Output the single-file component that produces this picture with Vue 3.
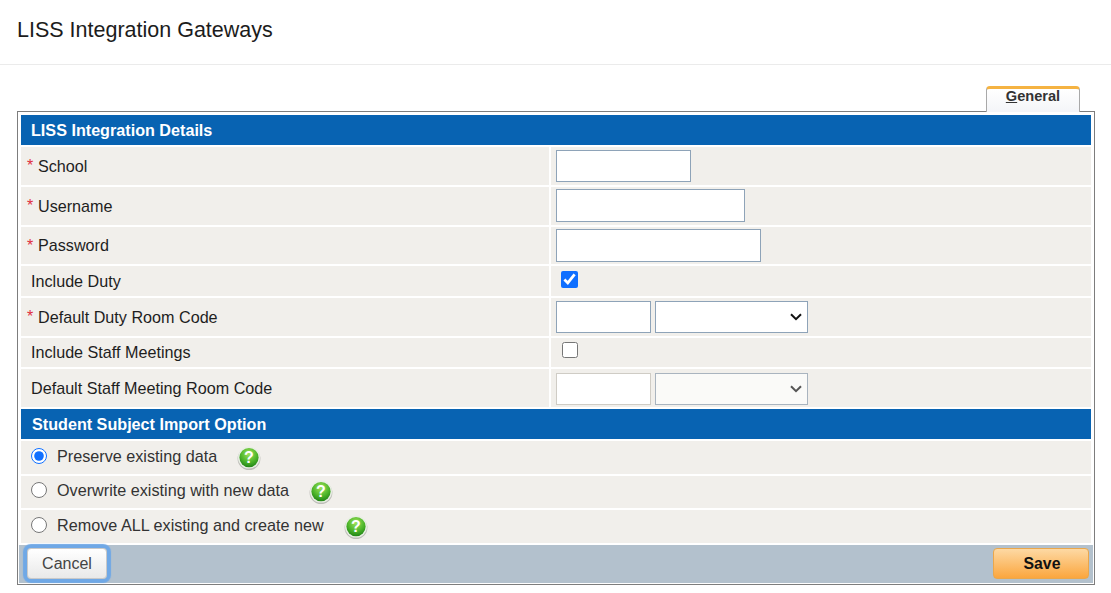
<script setup>
const radios = [
  { label: 'Preserve existing data', checked: true, h: 33 },
  { label: 'Overwrite existing with new data', checked: false, h: 32 },
  { label: 'Remove ALL existing and create new', checked: false, h: 33 }
]
</script>

<template>
  <div class="page">
    <header class="top"><h1>LISS Integration Gateways</h1></header>
    <div class="tabs"><div class="tab"><u>G</u>eneral</div></div>
    <section class="panel">
      <div class="inner">
        <div class="band">LISS Integration Details</div>
        <div class="row h38">
          <div class="lab"><i>*</i>School</div>
          <div class="val t3"><input class="w135 s32" type="text" /></div>
        </div>
        <div class="row h38">
          <div class="lab"><i>*</i>Username</div>
          <div class="val t2"><input class="w189" type="text" /></div>
        </div>
        <div class="row h37">
          <div class="lab"><i>*</i>Password</div>
          <div class="val t2"><input class="w205" type="password" /></div>
        </div>
        <div class="row h30">
          <div class="lab pad">Include Duty</div>
          <div class="val"><input class="chk" type="checkbox" checked /></div>
        </div>
        <div class="row h38">
          <div class="lab"><i>*</i>Default Duty Room Code</div>
          <div class="val t3"><input class="w95 s32" type="text" /><select class="sel"></select></div>
        </div>
        <div class="row h29">
          <div class="lab pad">Include Staff Meetings</div>
          <div class="val"><input class="chk off" type="checkbox" /></div>
        </div>
        <div class="row h38">
          <div class="lab pad">Default Staff Meeting Room Code</div>
          <div class="val t4"><input class="w95 s32" type="text" disabled /><select class="sel" disabled></select></div>
        </div>
        <div class="band second">Student Subject Import Option</div>
        <label v-for="r in radios" :key="r.label" class="radio" :style="{ height: r.h + 'px' }">
          <input type="radio" name="opt" :checked="r.checked" />
          <span class="rtext">{{ r.label }}</span>
          <svg class="help" width="24" height="24" viewBox="0 0 24 24">
            <defs>
              <radialGradient id="hg" cx="50%" cy="30%" r="72%">
                <stop offset="0" stop-color="#a0e35c" />
                <stop offset="0.6" stop-color="#4db52a" />
                <stop offset="1" stop-color="#1f8216" />
              </radialGradient>
            </defs>
            <circle cx="12" cy="12.8" r="11.4" fill="#bdbdb8" />
            <circle cx="12" cy="11.6" r="11" fill="#e9efe4" />
            <circle cx="12" cy="11.6" r="9.6" fill="url(#hg)" />
            <text x="12" y="17.4" text-anchor="middle" class="q">?</text>
          </svg>
        </label>
      </div>
      <footer class="foot">
        <button class="cancel">Cancel</button>
        <button class="save">Save</button>
      </footer>
    </section>
  </div>
</template>

<style>
html, body { margin: 0; background: #fff; }
</style>

<style scoped>
.page {
  width: 1111px;
  height: 593px;
  overflow: hidden;
  font-family: "Liberation Sans", Arial, sans-serif;
  color: #222;
  box-sizing: border-box;
}
.top {
  height: 64px;
  border-bottom: 1px solid #ebebeb;
  padding-left: 17px;
}
.top h1 {
  margin: 0;
  padding-top: 18px;
  font-size: 21.5px;
  line-height: 25px;
  font-weight: 400;
  color: #1c1c1c;
}
.tabs {
  display: flex;
  justify-content: flex-end;
  height: 26px;
  margin-top: 21px;
  padding-right: 31px;
  position: relative;
  z-index: 1;
}
.tab {
  width: 94px;
  height: 26px;
  box-sizing: border-box;
  border: 1px solid #a9a9a9;
  border-top: 3px solid #f5b342;
  border-bottom: 0;
  border-radius: 4px 4px 0 0;
  background: linear-gradient(#fff, #f4f5f8);
  text-align: center;
  font-size: 14.6px;
  font-weight: 700;
  line-height: 15px;
  color: #333;
}
.panel {
  margin: -1px 0 0 17px;
  width: 1078px;
  height: 474px;
  box-sizing: border-box;
  border: 1px solid #7d7d7d;
  display: flex;
  flex-direction: column;
  padding: 1px;
  background: #fff;
}
.inner {
  flex: 1;
  padding: 2px 2px 0;
  display: flex;
  flex-direction: column;
  gap: 2px;
}
.band {
  height: 30px;
  background: #0863b2;
  color: #fff;
  font-size: 16.16px;
  font-weight: 700;
  line-height: 30px;
  padding-left: 10px;
  overflow: hidden;
}
.band.second { padding-left: 11px; }
.row { display: flex; gap: 2px; }
.h38 { height: 38px; }
.h37 { height: 37px; }
.h30 { height: 30px; }
.h29 { height: 29px; }
.lab {
  width: 528px;
  flex: none;
  box-sizing: border-box;
  background: #f1efeb;
  font-size: 16.16px;
  display: flex;
  align-items: center;
  padding: 0 0 0 6px;
  white-space: pre;
  color: #1e1e1e;
}
.lab i {
  color: #e03040;
  font-style: normal;
  width: 11px;
  font-size: 16px;
}
.lab.pad { padding-left: 10px; }
.val {
  flex: 1;
  background: #f1efeb;
  display: flex;
  align-items: center;
  gap: 4px;
  padding-left: 5px;
}
.val.t2 { align-items: flex-start; padding-top: 2px; }
.val.t3 { align-items: flex-start; padding-top: 3px; }
.val.t4 { align-items: flex-start; padding-top: 4px; }
input[type="text"], input[type="password"] {
  height: 33px;
  box-sizing: border-box;
  border: 1px solid #8ea3b8;
  border-radius: 0;
  background: #fff;
  padding: 0 4px;
  margin: 0;
  outline: none;
}
input.s32[type="text"] { height: 32px; }
input:disabled { border-color: #cfccc5 !important; }
.w135 { width: 135px; }
.w189 { width: 189px; }
.w205 { width: 205px; }
.w95 { width: 95px; }
.sel {
  appearance: none;
  width: 153px;
  height: 32px;
  box-sizing: border-box;
  border: 1px solid #8ea3b8;
  border-radius: 0;
  background: #fff url("data:image/svg+xml,%3Csvg xmlns='http://www.w3.org/2000/svg' width='12' height='8'%3E%3Cpath d='M1 1.2l5 5 5-5' fill='none' stroke='%23111' stroke-width='2'/%3E%3C/svg%3E") no-repeat right 5px center;
  margin: 0;
  font-size: 14px;
  outline: none;
}
.sel:disabled {
  background: #fafaf8 url("data:image/svg+xml,%3Csvg xmlns='http://www.w3.org/2000/svg' width='12' height='8'%3E%3Cpath d='M1 1.2l5 5 5-5' fill='none' stroke='%23555' stroke-width='2'/%3E%3C/svg%3E") no-repeat right 5px center;
  border-color: #a9b4bf;
  opacity: 1;
}
.chk {
  width: 17px;
  height: 17px;
  margin: 0 0 4px 5px;
  accent-color: #0f6fff;
}
.chk.off { width: 16px; height: 16px; margin: 0 0 5px 5.5px; }
.radio {
  background: #f1efeb;
  display: flex;
  align-items: center;
  font-size: 16.2px;
  color: #333;
}
.radio input {
  width: 16px;
  height: 16px;
  margin: 0 10px 4px 10px;
  accent-color: #0f6fff;
}
.rtext { padding-bottom: 2px; }
.radio:nth-of-type(n) .rtext { padding-bottom: 3px; }
.help { flex: none; margin-left: 20px; }
.q {
  font-family: "Liberation Sans", Arial, sans-serif;
  font-size: 16px;
  font-weight: 700;
  fill: #fff;
}
.foot {
  height: 38px;
  margin-top: 2px;
  background: #b3c1cd;
  display: flex;
  align-items: flex-start;
  justify-content: space-between;
  padding: 3px 4px 0 8px;
  box-sizing: border-box;
}
.cancel {
  width: 80px;
  height: 31px;
  box-sizing: border-box;
  border: 1px solid #c9c9c9;
  border-radius: 4px;
  background: linear-gradient(#fff, #e9e9e9);
  box-shadow: 0 0 1px 4px #6fa8e6;
  font: 16px "Liberation Sans", Arial, sans-serif;
  color: #444;
  padding: 0;
}
.save {
  width: 96px;
  height: 31px;
  box-sizing: border-box;
  border: 1px solid #eaa74c;
  border-radius: 4px;
  background: linear-gradient(#fdd9a4, #fba63e);
  font: 700 15.8px "Liberation Sans", Arial, sans-serif;
  color: #111;
  padding: 0 0 0 2px;
}
</style>
